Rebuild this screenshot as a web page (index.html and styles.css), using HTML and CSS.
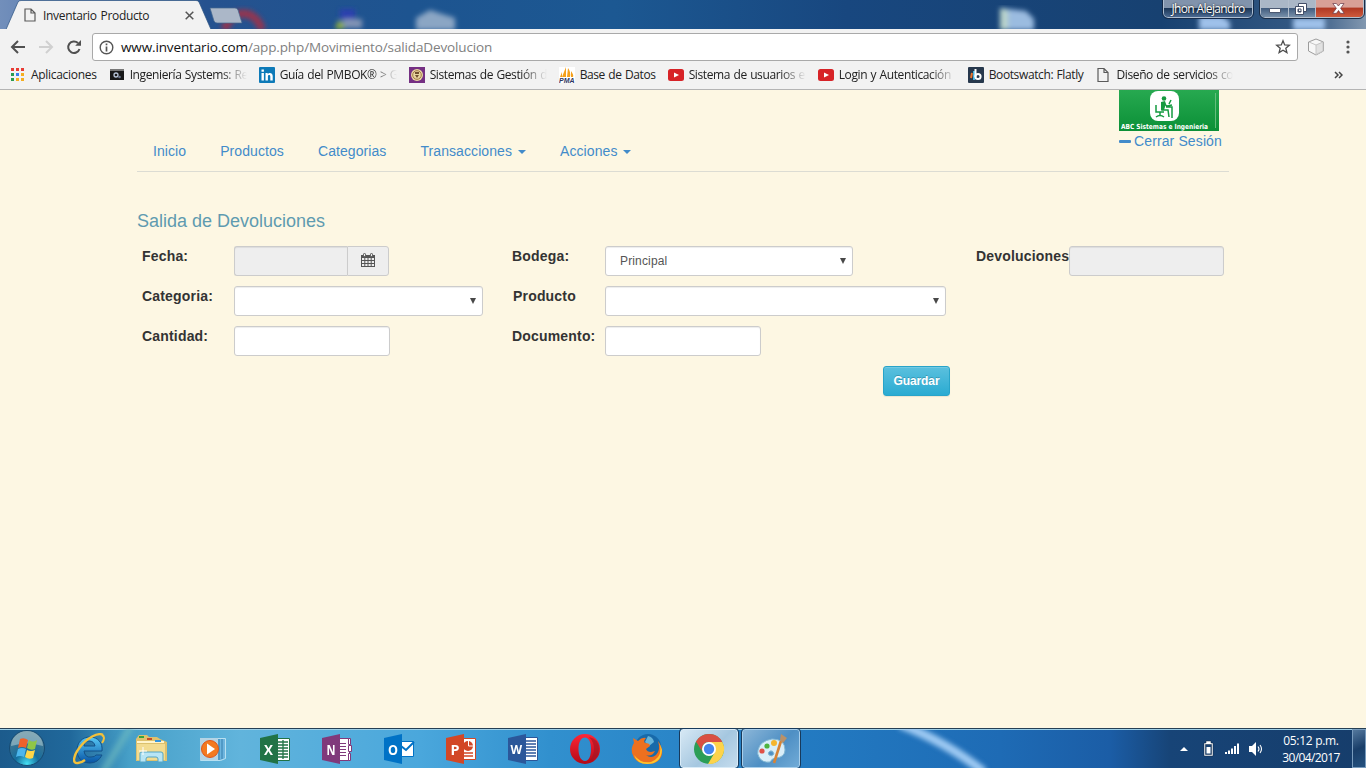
FILE: index.html
```html
<!DOCTYPE html>
<html lang="es">
<head>
<meta charset="utf-8">
<title>Inventario Producto</title>
<link rel="stylesheet" href="styles.css">
</head>
<body>
<div class="screen">
  <header class="titlebar">
    <svg class="glass" width="1366" height="29" viewBox="0 0 1366 29" aria-hidden="true">
      <defs>
        <linearGradient id="sky"><stop offset="0" stop-color="#728fbb"/><stop offset=".035" stop-color="#5f80b3"/><stop offset=".15" stop-color="#26528f"/><stop offset=".3" stop-color="#1d5490"/><stop offset=".45" stop-color="#1c5892"/><stop offset=".62" stop-color="#18477f"/><stop offset=".85" stop-color="#174171"/><stop offset=".96" stop-color="#365a84"/><stop offset="1" stop-color="#8298b0"/></linearGradient>
        <filter id="soft"><feGaussianBlur stdDeviation="2.600"/></filter>
      </defs>
      <path fill="url(#sky)" d="M0 0h1366v29H0z"/>
      <g filter="url(#soft)">
        <path d="M225 30c4-20 30-24 37 0" fill="none" stroke="#94364f" stroke-width="8"/>
        <path d="M340 9h15v11h-15z" fill="#293fae"/><path d="M343 19h19v9h-19z" fill="#8294b5"/><path d="M335 29l4-9 7 8z" fill="#9fbb32"/>
        <path d="M416 18l14-8 12 4 13 4v12h-39z" fill="#8ba6c4"/>
        <path d="M1000 8l26 3 8 8v11h-34z" fill="#9bbce0"/><path d="M1000 8l8 2v20h-8z" fill="#b9d3cb"/>
        <path d="M1199 16h23l8 6v8h-31zM1293 18h32v12h-32z" fill="#9fc1ea"/>
      </g>
      <path fill="#f2f2f2" stroke="#285080" stroke-width=".7" d="M6 29.500L18 2q1-1.500 3-1.500h175q2 0 3 1.500L211 29.500z"/>
      <path fill="#abb7c8" stroke="#45678e" stroke-width=".7" d="M210 8h25q2 0 3 2l4 13h-25q-2 0-3-2z"/>
    </svg>
    <div class="tab">
      <svg width="12" height="14" viewBox="0 0 12 14" fill="none" stroke="#5a5a5a" stroke-width="1.200"><path d="M1 1h6l4 4v8H1zM7 1v4h4"/></svg>
      <span>Inventario Producto</span>
      <svg width="9" height="9" viewBox="0 0 9 9" stroke="#555" stroke-width="1.500"><path d="M.7.700l7.600 7.600M8.300.700L.7 8.300"/></svg>
    </div>
    <div class="user">Jhon Alejandro</div>
    <div class="winbtns">
      <i class="min"><svg width="12" height="5"><path d="M.5.500h11v4H.5z" fill="#fff" stroke="#4b5871"/></svg></i>
      <i class="max"><svg width="12" height="12" fill="#fff" stroke="#424e68"><path d="M3.500.500h8v8h-8z"/><path d="M.5 3.500h8v8h-8zM3 6h3v3H3z" fill-rule="evenodd"/></svg></i>
      <i class="close"><svg width="13" height="11" viewBox="0 0 13 11"><path d="M.8.500h3.600l2 2.500 2-2.500H12L8.600 5.300l3.600 5H8.500l-2-2.800-2 2.800H.7l3.700-5z" fill="#fff" stroke="#673746" stroke-width=".7"/></svg></i>
    </div>
  </header>
  <div class="toolbar">
    <svg class="nav-icon" width="82" height="20" viewBox="0 0 82 20" fill="none" stroke-width="2"><g stroke="#505050"><path d="M17 10H4M10 4l-6 6 6 6"/><path d="M71.500 12a5.800 5.800 0 1 1-1.500-6"/><path d="M73 3v5.800h-5.800z" fill="#505050" stroke="none"/></g><path stroke="#d0d0d0" d="M31 10h13M38 4l6 6-6 6"/></svg>
    <div class="omnibox">
      <svg width="15" height="15" viewBox="0 0 15 15" fill="none" stroke="#555" stroke-width="1.400"><circle cx="7.500" cy="7.500" r="6.300"/><path d="M7.500 6.500v5M7.500 3.500v1.800" stroke-width="1.700"/></svg>
      <span class="url"><b>www.inventario.com</b>/app.php/Movimiento/salidaDevolucion</span>
      <svg width="16" height="16" viewBox="0 0 16 16" fill="none" stroke="#4e4e4e" stroke-width="1.300"><path d="M8 1.700l1.700 4.200 4.600.3-3.500 3 1.100 4.400L8 11.200l-3.900 2.400 1.100-4.400-3.500-3 4.600-.3z"/></svg>
    </div>
    <svg class="cube" width="18" height="18" viewBox="0 0 18 18" stroke="#9c9c9c"><path fill="#f7f7f7" d="M9 1l7.500 3v9L9 17l-7.500-4V4z"/><path fill="#e1e1e1" stroke="#c6c6c6" d="M9 7l7-3v9l-7 3.500z"/><path fill="none" stroke="#c6c6c6" d="M2 4l7 3"/></svg>
    <svg class="kebab" width="4" height="14" fill="#555"><circle cx="2" cy="2" r="1.600"/><circle cx="2" cy="7" r="1.600"/><circle cx="2" cy="12" r="1.600"/></svg>
  </div>
  <nav class="bookmarks">
    <a><svg class="apps" width="14" height="14"><path fill="#e83b34" d="M1 0h3v3H1zM6 0h3v3H6zM11 0h3v3h-3z"/><path fill="#2a9b50" d="M1 5h3v3H1zM1 10h3v3H1z"/><path fill="#3b7ded" d="M6 5h3v3H6z"/><path fill="#f5ae20" d="M11 5h3v3h-3zM6 10h3v3H6zM11 10h3v3h-3z"/></svg><span>Aplicaciones</span></a>
    <a class="long"><svg width="16" height="16"><path fill="#181818" d="M1 2h14v11H1z"/><path fill="#777" d="M1 2h14v2H1z"/><circle cx="7" cy="8" r="2" fill="none" stroke="#b8c4d8" stroke-width="1.300"/><circle cx="10.500" cy="10" r="1.300" fill="#6d7890"/></svg><span>Ingeniería Systems: Re</span></a>
    <a class="long"><svg width="16" height="16"><rect width="16" height="16" rx="1" fill="#0d7ab8"/><path fill="#fff" d="M2.500 6h2.400v7.500H2.500zM2.500 2.500h2.400v2.300H2.500zM6.500 6h2.200v1.200c1.200-2 5-1.600 5 1.800v4.500h-2.400V9.500c0-2-2.400-1.800-2.400 0v4H6.500z"/></svg><span>Guía del PMBOK® &gt; G</span></a>
    <a class="long"><svg width="16" height="16"><path fill="#753083" d="M0 0h16v16H0z"/><circle cx="8" cy="8" r="6" fill="#e9d7a1"/><circle cx="8" cy="8" r="4.300" fill="none" stroke="#a37c45"/><path fill="#71522f" d="M6 5h4v2H6zM6 8h4l-2 3z"/></svg><span>Sistemas de Gestión d</span></a>
    <a><svg width="16" height="16"><path fill="#fff" d="M0 0h16v16H0z"/><path fill="#f4a01c" d="M7 0v10H3zM9 1q3 4 2 9H8zM12 4q3 4 2 6h-2zM3 5v5H1z"/><text class="pma" x="0" y="15.500" textLength="15.500" lengthAdjust="spacingAndGlyphs">PMA</text></svg><span>Base de Datos</span></a>
    <a class="long"><svg width="16" height="16"><rect y="2" width="16" height="12" rx="2.500" fill="#d72327"/><path fill="#fff" d="M6 5.500l5 2.500-5 2.500z"/></svg><span>Sistema de usuarios e</span></a>
    <a class="long"><svg width="16" height="16"><rect y="2" width="16" height="12" rx="2.500" fill="#d72327"/><path fill="#fff" d="M6 5.500l5 2.500-5 2.500z"/></svg><span>Login y Autenticación</span></a>
    <a><svg width="16" height="16"><rect width="16" height="16" rx="1" fill="#27384d"/><path stroke="#e9752e" stroke-width="2" d="M4 6l-1 5"/><path stroke="#49b5df" stroke-width="2" d="M6 4v9"/><path stroke="#fff" stroke-width="2" d="M7.500 2v8"/><circle cx="10" cy="9.500" r="2.600" fill="none" stroke="#fff" stroke-width="2"/></svg><span>Bootswatch: Flatly</span></a>
    <a class="long"><svg width="16" height="16" fill="none" stroke="#5a5a5a" stroke-width="1.200"><path d="M3 1.500h6l4 4v9H3zM9 1.500v4h4"/></svg><span>Diseño de servicios co</span></a>
    <svg class="more" width="9" height="8" viewBox="0 0 9 8" fill="none" stroke="#444" stroke-width="1.500"><path d="M1 1l3 3-3 3M5 1l3 3-3 3"/></svg>
  </nav>
  <main class="page">
    <div class="container">
      <div class="masthead">
        <nav class="menu"><a>Inicio</a><a>Productos</a><a>Categorias</a><a>Transacciones<i class="caret"></i></a><a>Acciones<i class="caret"></i></a></nav>
        <div class="account">
          <svg width="100" height="41" viewBox="0 0 100 41"><defs><linearGradient id="green" x2="0" y2="1"><stop stop-color="#27a950"/><stop offset="1" stop-color="#0b9037"/></linearGradient></defs><path fill="url(#green)" d="M0 0h100v41H0z"/><path stroke="#65bd7d" d="M96.500 3v35"/><rect x="31" y="1" width="29" height="30" rx="8" fill="#fff"/><g fill="none" stroke="#159a40" stroke-width="1.500"><path d="M37 15v7h8M41 22v4M37 27q4-3 8 0M43 12v8h6l1 7M44 13l4 3 5-1M47 17h6v11M52 10l-2 4"/></g><circle cx="45" cy="8.500" r="2.300" fill="#159a40"/><path d="M42 12l4-1 1 3-2 6h-3z" fill="#159a40"/><text class="brand" x="2" y="39" textLength="87" lengthAdjust="spacingAndGlyphs">ABC Sistemas e Ingenieria</text></svg>
          <a class="logout"><i class="minus"></i>Cerrar Sesión</a>
        </div>
      </div>
      <h1>Salida de Devoluciones</h1>
      <form class="form">
        <label>Fecha:</label>
        <div class="date"><input type="text" disabled><span><svg width="14" height="14" viewBox="0 0 14 14"><path fill="#555" d="M0 2h14v12H0z"/><path fill="#eee" d="M1 5h2.300v2H1zM4.300 5h2.200v2H4.300zM7.500 5h2.200v2H7.500zM10.700 5H13v2h-2.300zM1 8h2.300v2H1zM4.300 8h2.200v2H4.300zM7.500 8h2.200v2H7.500zM10.700 8H13v2h-2.300zM1 11h2.300v2H1zM4.300 11h2.200v2H4.300zM7.500 11h2.200v2H7.500zM10.700 11H13v2h-2.300z"/><rect x="2.500" y=".5" width="2" height="3" rx=".8" fill="#eee" stroke="#555"/><rect x="9.500" y=".5" width="2" height="3" rx=".8" fill="#eee" stroke="#555"/></svg></span></div>
        <label>Bodega:</label>
        <div class="select w248"><select><option>Principal</option></select><i></i></div>
        <label class="devol">Devoluciones</label>
        <input type="text" class="w155" disabled>
        <label>Categoria:</label>
        <div class="select w249"><select></select><i></i></div>
        <label class="inset">Producto</label>
        <div class="select w341"><select></select><i></i></div>
        <label class="row3">Cantidad:</label>
        <input type="text" class="w156">
        <label>Documento:</label>
        <input type="text" class="w156">
        <button type="button" class="save">Guardar</button>
      </form>
    </div>
  </main>
  <footer class="taskbar">
    <svg class="streaks" width="1366" height="40" viewBox="0 0 1366 40" preserveAspectRatio="none" aria-hidden="true"><defs><filter id="glow"><feGaussianBlur stdDeviation="2.500"/></filter></defs><g filter="url(#glow)" fill="none"><path d="M900-5Q946 13 984 44" stroke="#9fcaf3" stroke-width="9"/><path d="M103 44l28-47" stroke="#72bcc0" stroke-width="7" opacity=".6"/></g></svg>
    <div class="start"><svg width="38" height="38" viewBox="0 0 38 38"><defs><radialGradient id="orb" cy=".95" r=".85"><stop stop-color="#45e1f4"/><stop offset=".4" stop-color="#146d9d"/><stop offset="1" stop-color="#4d788f"/></radialGradient></defs><circle cx="19" cy="19" r="17.500" fill="url(#orb)" stroke="#164b73"/><path d="M3 17a16 15 0 0 1 32 0q-16-5-32 0z" fill="#cce4e7" opacity=".45"/><path fill="#ee622b" d="M12 10q4-2 8 1l-2 8q-4-2-8 0z"/><path fill="#8fc646" d="M21 11q4 3 8 0l-2 9q-4 2-8-1z"/><path fill="#4bb6ec" d="M10 20q4-2 8 0l-2 8q-4-2-8 0z"/><path fill="#fdd647" d="M19 21q4 2 8 0l-2 8q-4 2-8-1z"/></svg></div>
    <div class="tasks">
      <div><svg width="32" height="32" viewBox="0 0 32 32"><defs><linearGradient id="ie" x2="0" y2="1"><stop stop-color="#57c8f6"/><stop offset="1" stop-color="#0753a4"/></linearGradient></defs><path d="M29 18H11q1 7 7 6 4 0 5-2h6q-4 8-12 8C8 30 4 24 4 17S9 4 17 4s13 6 12 14zM22 13q-1-5-6-5t-5 5z" fill="url(#ie)" stroke="#135188" fill-rule="evenodd"/><path d="M30 2C25-1 14 5 7 14S-1 31 5 30q3 0 7-3" fill="none" stroke="#f4c13a" stroke-width="2.400"/><path d="M29 2q4 2 0 8" fill="none" stroke="#f4c13a" stroke-width="2"/></svg></div>
      <div><svg width="32" height="32" viewBox="0 0 32 32"><path fill="#dfc16d" d="M1 6l3-4h8l2 2h8l3 2 7 3v19H1z"/><path fill="#fff4cb" d="M2 8h27v4H2z"/><path fill="#35a43e" d="M4 3h5v2H4z"/><path fill="#c74b27" d="M12 5h5v2h-5z"/><path fill="#3296df" d="M20 7h6v2h-6z"/><path fill="#f2dc91" stroke="#dbc16f" d="M1.500 10.500h29v17h-29z"/><path fill="#b8e5f5" stroke="#55a5c5" d="M5 29V20q0-1 2-1h19q2 0 2 2v8h-5v-3q0-2-2-2h-8q-2 0-2 2v3z"/><path stroke="#fff" d="M8 14v8M4 18h8"/></svg></div>
      <div><svg width="32" height="32" viewBox="0 0 32 32"><path fill="#6eb5de" stroke="#b8e0f1" d="M3.500 5.500h25v20l-5 2h-20z"/><path stroke="#337fae" d="M22 6v21M25 6v20"/><path fill="#b4d4e5" d="M3 5h18v22H3z"/><circle cx="13" cy="16" r="8.500" fill="#f47a20" stroke="#e0561a"/><path fill="#fff" d="M10 10.500l8 5.500-8 5.500z"/></svg></div>
      <div class="office"><svg width="32" height="32" viewBox="0 0 32 32"><path fill="#fff" stroke="#217346" d="M17.500 5.500h13v22h-13z"/><path stroke="#217346" stroke-width="1.300" d="M19 9h10M19 12h10M19 15h10M19 18h10M19 21h10M19 24h10M24 7v19"/><path fill="#217346" d="M1 5l18-4v30L1 27z"/><text x="5" y="21.500" textLength="9" lengthAdjust="spacingAndGlyphs">X</text></svg></div>
      <div class="office"><svg width="32" height="32" viewBox="0 0 32 32"><path fill="#fff" stroke="#80397b" d="M17.500 5.500h11v22h-11z"/><path fill="#fff" stroke="#80397b" d="M27.500 5.500h2v6h-2zM27.500 12.500h3v6h-3zM27.500 20.500h2v7h-2z"/><path stroke="#80397b" d="M19 10.500h6M19 13.500h6M19 16.500h6M19 19.500h6M19 22.500h6"/><path fill="#80397b" d="M1 5l18-4v30L1 27z"/><text x="5.500" y="21.500" textLength="9" lengthAdjust="spacingAndGlyphs">N</text></svg></div>
      <div class="office"><svg width="32" height="32" viewBox="0 0 32 32"><path fill="#fff" stroke="#0072c6" d="M17 8.500h13.500v15H17z"/><path fill="none" stroke="#0072c6" stroke-width="2" d="M18 13l5 4 8-8"/><path fill="#0072c6" d="M1 5l18-4v30L1 27z"/><text x="5" y="21.500" textLength="10" lengthAdjust="spacingAndGlyphs">O</text></svg></div>
      <div class="office"><svg width="32" height="32" viewBox="0 0 32 32"><path fill="#fff" stroke="#d24726" d="M17.500 5.500h13v21h-13z"/><circle cx="23" cy="13" r="5" fill="#d24726"/><path stroke="#fff" fill="none" d="M23.500 8v5H29"/><path stroke="#d24726" stroke-width="1.500" d="M19 20h9M19 23h9"/><path fill="#d24726" d="M1 5l18-4v30L1 27z"/><text x="5.500" y="21.500" textLength="9" lengthAdjust="spacingAndGlyphs">P</text></svg></div>
      <div class="office"><svg width="32" height="32" viewBox="0 0 32 32"><path fill="#fff" stroke="#2b579a" d="M17.500 4.500h13v23h-13z"/><path stroke="#2b579a" stroke-width="1.300" d="M19 8h10M19 11h10M19 14h10M19 17h10M19 20h10M19 23h10"/><path fill="#2b579a" d="M1 5l18-4v30L1 27z"/><text x="3.500" y="21" class="word">W</text></svg></div>
      <div><svg width="32" height="32" viewBox="0 0 32 32"><defs><linearGradient id="opera" x2="0" y2="1"><stop stop-color="#ff2636"/><stop offset="1" stop-color="#b30917"/></linearGradient></defs><path fill="url(#opera)" fill-rule="evenodd" d="M16 1a15 15 0 1 0 0 30 15 15 0 0 0 0-30zm0 3.500c4 0 6 5 6 11.500s-2 12-6 12-6.500-5-6.500-12S12 4.500 16 4.500z"/><path fill="#9d1723" opacity=".6" d="M20 4q10 2 10 12T20 28q5-5 5-12T20 4z"/></svg></div>
      <div><svg width="32" height="32" viewBox="0 0 32 32"><circle cx="17" cy="14" r="13" fill="#186aaa"/><path fill="#67b4d9" d="M17 3q5 1 6 6l-5 4-4-4z"/><path fill="#ed701f" d="M2 5l5 3q4-4 8-3-3 3-1 5 5 0 5 3l-4 3q1 3 5 3l4-1q-3 6-9 4 5 4 10 0 5-5 2-14 5 7 4 13-2 10-15 10Q4 31 1 20q-1-6 2-10z"/><path fill="#ffc52d" d="M28 9q5 15-8 20-10 2-17-7 3 9 13 9 14 0 15-14z"/></svg></div>
      <div class="active"><svg width="32" height="32" viewBox="0 0 32 32"><circle cx="16" cy="16" r="15" fill="#2b9e56"/><path fill="#fdd34b" d="M16 9h13.300A15 15 0 0 1 15 31l7-12z"/><path fill="#d94f42" d="M3 8.500A15 15 0 0 1 29.300 9H16a7 7 0 0 0-6.500 10z"/><circle cx="16" cy="16" r="7" fill="#fff"/><circle cx="16" cy="16" r="5.200" fill="#4485ed"/></svg></div>
      <div class="open"><svg width="32" height="32" viewBox="0 0 32 32"><path fill="#d9eef9" stroke="#83b8d4" d="M3 17Q5 8 17 6q13 0 13 11 0 7-9 8-4 0-6 4-8 1-11-5-2-3-1-7zm12 1q-3 2-1 4 3 2 5-1-1-4-4-3z"/><circle cx="7" cy="18" r="2.600" fill="#df5148"/><circle cx="12" cy="13" r="2.600" fill="#4db340"/><circle cx="19" cy="10" r="3" fill="#f5b52e"/><path stroke="#d68336" stroke-width="2.600" d="M26 8l-7 22"/><path fill="#b99168" d="M25 7l1-6 6 4-4 5z"/></svg></div>
    </div>
    <div class="tray">
      <svg width="84" height="18" viewBox="0 0 84 18"><path fill="#fff" d="M0 11h8L4 7z"/><path fill="#fff" stroke="#0e2443" stroke-width=".5" d="M24 3h2V1h5v2h2v13h-9zM25.500 4.500v10h6v-10z" fill-rule="evenodd"/><path fill="#fff" d="M26.500 7h4v6.500h-4zM45 12h2v2h-2zM48 10.500h2V14h-2zM51 8.500h2V14h-2zM54 6h2v8h-2zM57 3.500h2V14h-2zM69 6h3l4-4v14l-4-4h-3z"/><path fill="none" stroke="#fff" stroke-width="1.100" d="M78 6.500q2 2.500 0 5M80 5q3 4 0 8"/></svg>
      <div class="clock"><span>05:12 p.m.</span><span class="day">30/04/2017</span></div>
    </div>
    <div class="desk"></div>
  </footer>
</div>
</body>
</html>
```

FILE: styles.css
```css
* { box-sizing: border-box; }
body { margin: 0; overflow: hidden; font-family: "Liberation Sans", Arial, sans-serif; }
.screen { width: 1366px; height: 768px; display: flex; flex-direction: column; background: #fcf8e3; }
svg { flex: none; display: block; }

.titlebar { position: relative; height: 29px; display: flex; font: 12px "Open Sans", sans-serif; }
.glass { position: absolute; inset: 0; }
.tab { position: relative; width: 211px; height: 29px; padding: 1px 17px 0 24px; display: flex; align-items: center; color: #222; letter-spacing: -.32px; }
.tab span { flex: 1; margin-left: 7px; white-space: nowrap; word-spacing: 1px; }
.user { position: relative; margin-left: auto; width: 90px; height: 18px; border: 1px solid #aebed1; border-top: 0; border-radius: 0 0 5px 5px; outline: 1px solid #152b4a; background: linear-gradient(#8193ac 50%, #1b3657 50%, #4b6a92); color: #fff; text-align: center; line-height: 17px; letter-spacing: -.65px; white-space: nowrap; text-shadow: 0 0 2px #000; }
.winbtns { position: relative; display: flex; width: 104px; height: 18px; margin: 0 2px 0 7px; border: 1px solid #b4bfcd; border-top: 0; border-radius: 0 0 5px 5px; outline: 1px solid #1a2d47; overflow: hidden; }
.winbtns i { display: flex; align-items: center; justify-content: center; background: linear-gradient(#aab7c7 45%, #425d7f 50%, #7890aa); border-right: 1px solid #b4bfcd; }
.min { width: 28px; padding-top: 3px; }
.max { width: 27px; padding-right: 3px; }
.winbtns .close { flex: 1; padding-right: 2px; border: 0; background: linear-gradient(#d8a097 40%, #b13a25 50%, #ce5a3c); }

.toolbar { height: 33px; display: flex; align-items: center; background: #f2f2f2; padding: 3px 16px 0 8px; }
.omnibox { width: 1206px; height: 28px; margin: 0 9px 0 2px; border: 1px solid #a9a9a9; border-radius: 3px; background: #fff; display: flex; align-items: center; padding: 0 6px; }
.url { flex: 1; margin-left: 7px; font: 14px "Open Sans", sans-serif; font-size: 13.500px; letter-spacing: -.13px; color: #808080; white-space: nowrap; }
.url b { font-weight: 400; color: #111; }
.kebab { margin-left: auto; }

.bookmarks { height: 28px; display: flex; align-items: center; gap: 12px; padding: 0 23px 2px 10px; background: #f2f2f2; border-bottom: 1px solid #b4b4b4; font: 12px "Open Sans", sans-serif; letter-spacing: -.38px; word-spacing: .6px; color: #222; }
.bookmarks a { display: flex; align-items: center; white-space: nowrap; flex: none; }
.bookmarks span { margin-left: 5px; }
.bookmarks .apps + span { margin-left: 7px; letter-spacing: -.3px; }
.bookmarks .long { width: 138px; -webkit-mask-image: linear-gradient(90deg, #000 112px, transparent 138px); mask-image: linear-gradient(90deg, #000 112px, transparent 138px); }
.pma { font: italic bold 7px "Liberation Sans", sans-serif; letter-spacing: 0; fill: #2e3560; }
.more { margin-left: auto; }

.page { height: 638px; background: #fdf7e3; }
.container { width: 1092px; margin-left: 137px; }
.masthead { height: 82px; display: flex; justify-content: space-between; border-bottom: 1px solid #dcdcd3; color: #428bca; font-size: 14px; }
.menu { display: flex; gap: 34px; padding: 51px 0 0 16px; line-height: 20px; letter-spacing: .08px; }
.menu a { white-space: nowrap; }
.caret { display: inline-block; margin-left: 6px; vertical-align: middle; border: 4px solid transparent; border-top-color: #428bca; border-bottom: 0; }
.account { width: 110px; }
.logout { display: flex; align-items: center; line-height: 20px; white-space: nowrap; letter-spacing: .12px; }
.minus { width: 12px; height: 3px; margin-right: 3px; border-radius: 1px; background: #428bca; }
.brand { font: bold 7px "DejaVu Sans", sans-serif; fill: #fff; }
h1 { margin: 39px 0 15px; font-size: 18px; line-height: 20px; font-weight: 400; color: #5f9bb0; }

.form { display: grid; grid-template-columns: 92px 278px 93px 371px 93px 155px; grid-auto-rows: 30px; row-gap: 10px; padding-left: 5px; }
.form label { font-size: 14px; line-height: 20px; font-weight: 700; color: #333; letter-spacing: .18px; white-space: nowrap; }
.form .inset { padding-left: 1px; }
.form .row3 { grid-column: 1; }
.form input, .form select { height: 30px; margin: 0; padding: 0 14px; border: 1px solid #ccc; border-radius: 3px; background: #fff; color: #555; font: 12px "Liberation Sans", sans-serif; letter-spacing: .15px; box-shadow: inset 0 1px 1px rgba(0,0,0,.075); appearance: none; opacity: 1; }
.form input:disabled { background: #eee; }
.select { position: relative; height: 30px; }
.form select { width: 100%; display: block; }
.select i { position: absolute; right: 7px; top: 12px; border: 3px solid transparent; border-top: 6px solid #484848; border-bottom: 0; }
.w155 { width: 155px; }
.w156 { width: 156px; }
.w248 { width: 248px; }
.w249 { width: 249px; }
.w341 { width: 341px; }
.date { display: flex; width: 155px; }
.form .date input { width: 113px; border-right: 0; border-radius: 3px 0 0 3px; }
.date span { width: 42px; height: 30px; padding-bottom: 2px; border: 1px solid #ccc; border-radius: 0 3px 3px 0; background: #eee; display: flex; align-items: center; justify-content: center; }
.save { grid-column: 4; grid-row: 4; justify-self: end; width: 67px; height: 30px; margin-right: 26px; padding: 0; border: 1px solid #28a4c9; border-radius: 3px; background: linear-gradient(#5bc0de, #2aabd2); box-shadow: inset 0 1px 0 rgba(255,255,255,.15), 0 1px 1px rgba(0,0,0,.075); color: #fff; font: bold 12px "Liberation Sans", sans-serif; letter-spacing: -.1px; text-shadow: 0 -1px 0 rgba(0,0,0,.2); }

.taskbar { position: relative; height: 40px; display: flex; border-top: 1px solid #263f54; box-shadow: inset 0 1px #9ed0e8; background: linear-gradient(90deg, #1c5b8c 0, #20689b 70px, #47a0c8 130px, #61b4dc 240px, #4aa7dc 420px, #3190ce 550px, #237bc2 800px, #1e6bb5 1000px, #1b5da6 1110px, #174477 1170px, #163d6b 1366px); }
.streaks { position: absolute; inset: 0; width: 100%; height: 100%; }
.start { position: relative; width: 58px; padding: 0 0 0 8px; }
.tasks { position: relative; display: flex; }
.tasks div { width: 62px; height: 39px; display: flex; align-items: center; justify-content: center; }
.office text { font: bold 15px "Open Sans", sans-serif; fill: #fff; }
.office .word { font-size: 12px; }
.tasks .active, .tasks .open { width: 58px; margin: 0 2px; border: 1px solid #d9ebf7; border-radius: 3px; outline: 1px solid #183a5b; background: linear-gradient(135deg, #d6e8f4, #a5c7e0 55%, #c4dced); }
.tasks .open { background: linear-gradient(135deg, #8bb6d8, #4e8fc4 55%, #71abd7); border-color: #a9cfeb; }
.tray { position: relative; margin-left: auto; display: flex; align-items: center; gap: 6px; color: #fff; font: 12px "Open Sans", sans-serif; letter-spacing: -.3px; }
.clock { width: 82px; display: flex; flex-direction: column; text-align: center; line-height: 17px; }
.day { letter-spacing: -.6px; }
.desk { position: relative; width: 14px; border: 1px solid #789bbd; background: linear-gradient(155deg, #54789d, #193e69 50%, #24517f); }
```
